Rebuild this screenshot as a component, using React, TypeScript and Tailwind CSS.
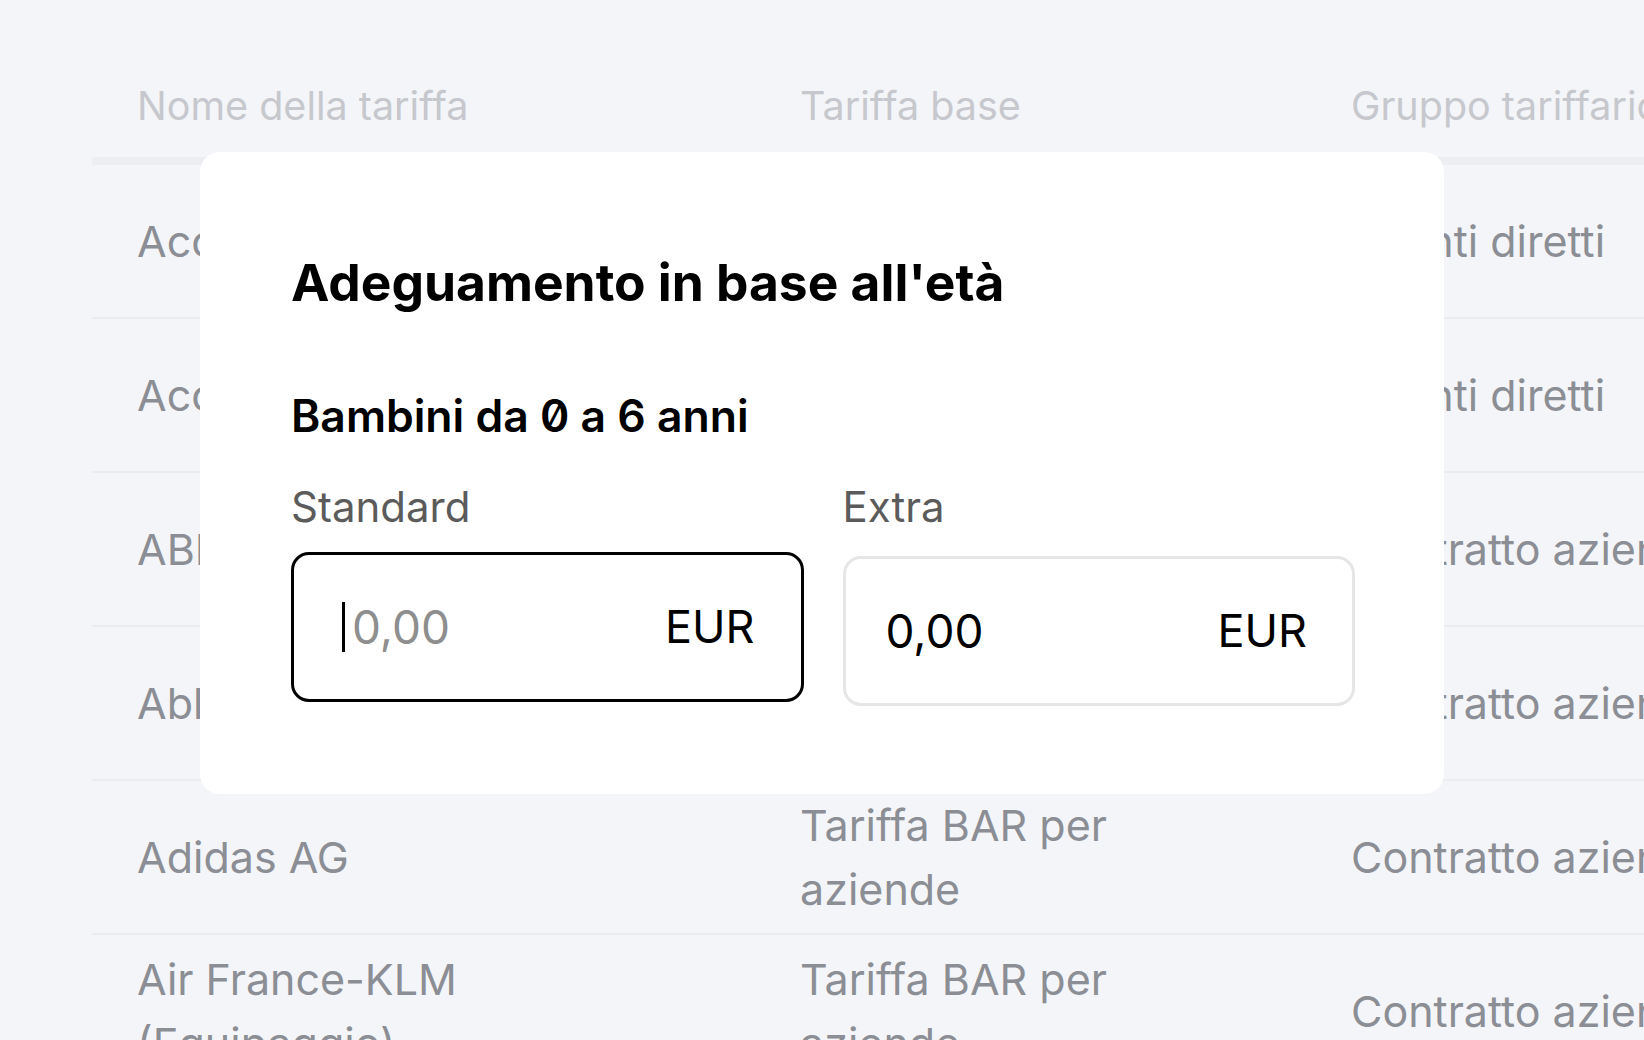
import React from 'react';

type Row = { name: string[]; base: string[]; group: string };

const rows: Row[] = [
  { name: ['Accenture'], base: ['Tariffa BAR'], group: 'Clienti diretti' },
  { name: ['Accor SA'], base: ['Tariffa BAR'], group: 'Clienti diretti' },
  { name: ['ABB Ltd'], base: ['Tariffa BAR per', 'aziende'], group: 'Contratto aziendale' },
  { name: ['Ableton AG'], base: ['Tariffa BAR per', 'aziende'], group: 'Contratto aziendale' },
  { name: ['Adidas AG'], base: ['Tariffa BAR per', 'aziende'], group: 'Contratto aziendale' },
  { name: ['Air France-KLM', '(Equipaggio)'], base: ['Tariffa BAR per', 'aziende'], group: 'Contratto aziendale' },
];

const PriceField: React.FC<{ label: string; value: string; focused?: boolean }> = ({ label, value, focused }) => (
  <div className="flex flex-col">
    <span className="text-[42px] leading-[48px] text-[#5b5b5b]">{label}</span>
    <div
      className={
        focused
          ? 'mt-[21px] flex h-[150px] items-center justify-between rounded-[18px] border-[3px] border-black bg-white pl-[48px] pr-[46px]'
          : 'mt-[25px] flex h-[150px] items-center justify-between rounded-[18px] border-[3px] border-[#e6e6e6] bg-white pl-[40px] pr-[45px]'
      }
    >
      <div className="flex items-center">
        {focused && <span className="mr-[7px] block h-[50px] w-[3px] bg-black" />}
        <span className={focused ? 'text-[46px] text-[#8e8e8e]' : 'text-[46px] text-black'}>{value}</span>
      </div>
      <span className="text-[45px] text-black">EUR</span>
    </div>
  </div>
);

export default function App() {
  return (
    <div className="relative h-screen w-full overflow-hidden bg-[#f4f5f8] font-['Inter',sans-serif]">
      <div className="ml-[92px] w-[1700px] pt-[57px]">
        <div className="flex h-[108px] items-center border-b-[8px] border-[#eceef2] text-[39.5px] text-[#c6c8cd]">
          <div className="w-[663px] shrink-0 pl-[45px]">Nome della tariffa</div>
          <div className="w-[551px] shrink-0 pl-[45px]">Tariffa base</div>
          <div className="pl-[45px] whitespace-nowrap">Gruppo tariffario</div>
        </div>
        {rows.map((r, i) => (
          <div
            key={i}
            className="flex h-[154px] items-center border-b-[2px] border-[#eaecf0] text-[43px] leading-[64px] text-[#8b8e94]"
          >
            <div className="w-[663px] shrink-0 pl-[45px] pr-[60px]">
              {r.name.map((l) => (
                <div key={l}>{l}</div>
              ))}
            </div>
            <div className="w-[551px] shrink-0 pl-[45px] pr-[60px]">
              {r.base.map((l) => (
                <div key={l}>{l}</div>
              ))}
            </div>
            <div className="pl-[45px] whitespace-nowrap">{r.group}</div>
          </div>
        ))}
      </div>

      {/* dialog */}
      <div className="absolute left-[200px] top-[152px] w-[1244px] rounded-[20px] bg-white pl-[91px] pr-[89px] pt-[100px] pb-[88px]">
        <h2 className="text-[51.5px] font-bold leading-[60px] text-black">Adeguamento in base all'età</h2>
        <h3 className="mt-[80px] text-[44.5px] font-semibold leading-[48px] text-black slashed-zero">
          Bambini da 0 a 6 anni
        </h3>
        <div className="mt-[43px] grid grid-cols-2 gap-[39px]">
          <PriceField label="Standard" value="0,00" focused />
          <PriceField label="Extra" value="0,00" />
        </div>
      </div>
    </div>
  );
}
